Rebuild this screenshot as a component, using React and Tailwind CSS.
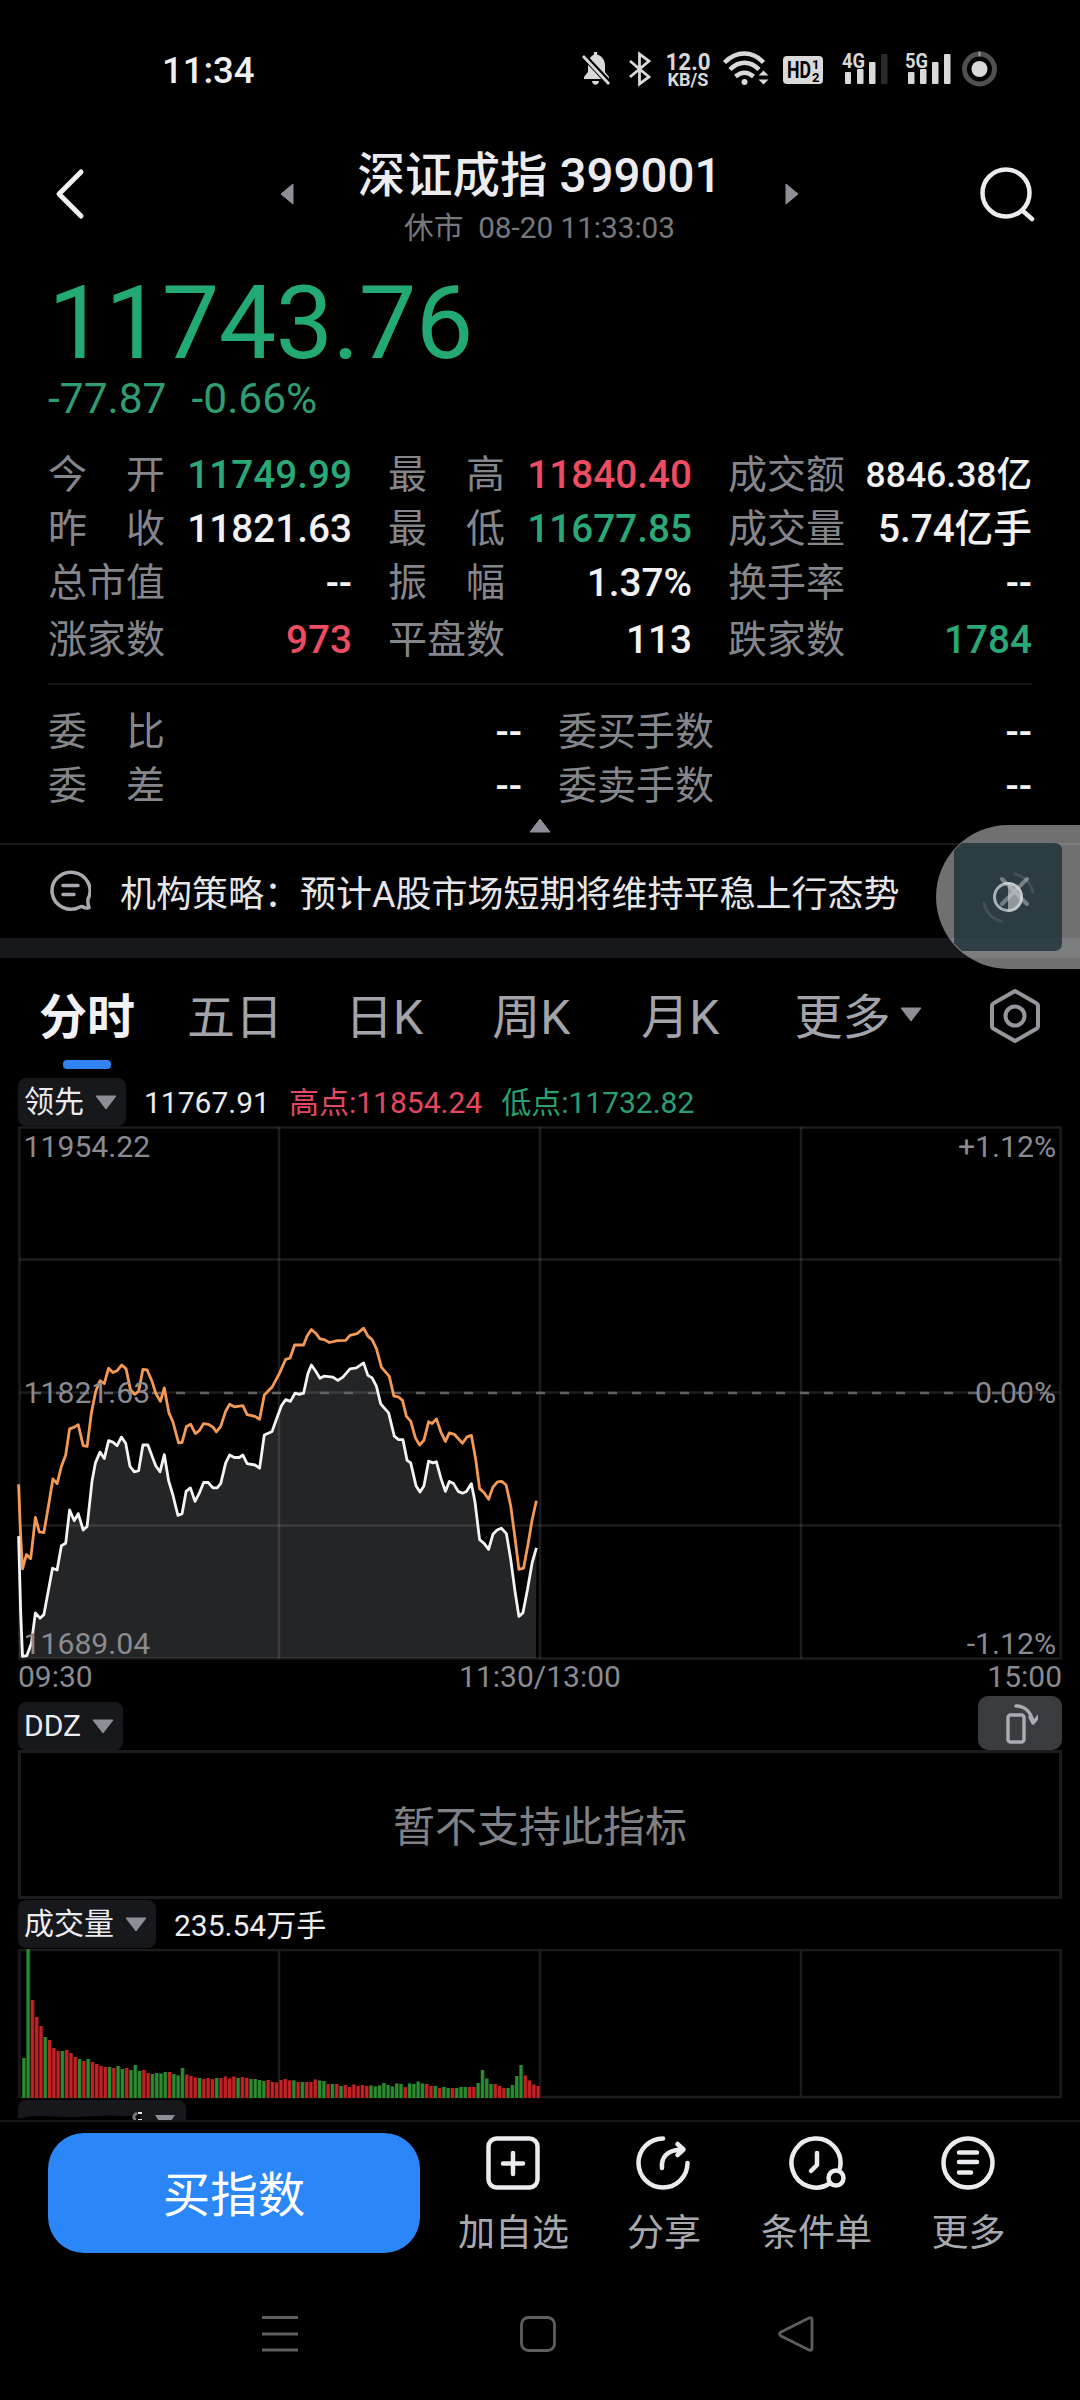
import React from "react";

const quoteRows = [
  [
    { label: "今开", value: "11749.99", color: "text-[#2aa878]" },
    { label: "最高", value: "11840.40", color: "text-[#ee4c62]" },
    { label: "成交额", value: "8846.38亿", color: "text-[#f2f2f4]", small: true },
  ],
  [
    { label: "昨收", value: "11821.63", color: "text-[#f2f2f4]" },
    { label: "最低", value: "11677.85", color: "text-[#2aa878]" },
    { label: "成交量", value: "5.74亿手", color: "text-[#f2f2f4]" },
  ],
  [
    { label: "总市值", value: "--", color: "text-[#f2f2f4]" },
    { label: "振幅", value: "1.37%", color: "text-[#f2f2f4]" },
    { label: "换手率", value: "--", color: "text-[#f2f2f4]" },
  ],
  [
    { label: "涨家数", value: "973", color: "text-[#ee4c62]" },
    { label: "平盘数", value: "113", color: "text-[#f2f2f4]" },
    { label: "跌家数", value: "1784", color: "text-[#2aa878]" },
  ],
];

const orderRows = [
  ["委比", "委买手数"],
  ["委差", "委卖手数"],
];

const tabs = [
  { name: "五日", space: "ml-[52px]" },
  { name: "日K", space: "ml-[62px]" },
  { name: "周K", space: "ml-[69px]" },
  { name: "月K", space: "ml-[71px]" },
  { name: "更多", space: "ml-[75px]" },
];

// price and leading series, stored at 2.8 units per pixel
const SCALE = 2.8;
const priceSeries =
  "52,1165 58,1380 63,1502 75,1500 88,1465 99,1380 112,1395 123,1385 135,1320 147,1255 160,1260 172,1192 184,1185 195,1092 208,1122 219,1102 233,1148 244,1138 258,1010 267,960 280,930 292,948 304,898 316,902 328,912 340,888 352,905 364,970 376,985 388,982 400,910 414,910 436,968 448,985 460,937 472,1010 484,1050 498,1107 510,1102 521,1040 533,1030 546,1068 558,1045 570,1015 583,1015 596,1030 608,1030 618,1018 632,960 643,938 656,945 670,945 680,938 692,962 714,966 727,975 740,882 762,872 775,835 788,800 800,783 813,788 826,765 838,768 850,765 862,710 872,686 885,705 896,723 908,717 932,720 946,729 960,720 980,697 998,694 1018,680 1030,715 1042,722 1054,745 1066,795 1088,820 1104,885 1116,895 1128,895 1140,953 1150,960 1165,1025 1176,1042 1187,1025 1200,955 1212,960 1222,957 1235,1005 1247,1040 1258,1012 1270,1018 1283,1040 1295,1045 1306,1040 1320,1018 1330,1070 1343,1175 1355,1185 1368,1202 1380,1160 1392,1148 1404,1143 1418,1158 1430,1230 1442,1320 1453,1390 1464,1380 1477,1315 1490,1240 1502,1198";
const leadSeries =
  "52,1020 57,1150 63,1257 74,1217 86,1228 99,1113 110,1153 123,1155 135,1085 148,1005 160,1018 172,970 184,938 195,865 208,860 219,853 233,912 244,914 256,820 268,760 280,730 292,738 304,695 316,707 328,702 341,686 353,697 365,755 377,768 388,760 400,698 412,700 425,730 436,765 449,788 460,750 473,820 484,845 500,904 510,903 522,858 534,852 547,878 558,870 570,850 583,852 596,860 606,873 618,858 632,815 643,796 656,803 680,800 692,825 714,830 727,838 740,770 762,748 782,710 800,670 812,667 825,630 850,630 860,605 872,587 884,597 896,613 908,615 922,623 945,618 968,617 980,603 1000,598 1018,583 1030,605 1042,615 1054,640 1068,692 1090,718 1103,773 1115,775 1127,785 1138,830 1150,843 1163,890 1175,910 1187,897 1200,845 1210,850 1222,837 1235,875 1247,900 1258,876 1272,880 1295,905 1308,887 1320,883 1332,950 1343,1032 1355,1043 1368,1062 1380,1028 1393,1013 1405,1012 1417,1022 1430,1080 1442,1170 1453,1258 1466,1255 1478,1190 1490,1120 1502,1066";

const toPoints = (series) =>
  series
    .split(" ")
    .map((p) => {
      const [x, y] = p.split(",").map(Number);
      return `${(x / SCALE).toFixed(1)},${(y / SCALE - 6).toFixed(1)}`;
    })
    .join(" ");

// one bar per minute: r = up, g = down, number = height
const volumes =
  "g40 g150 r98 r81 r72 g61 r58 r50 r47 g47 r48 r45 r41 g39 r37 g39 r36 r34 r32 r31 g31 r30 g32 g29 r30 g28 g33 g27 r28 r25 g24 g25 g24.5 g26 r26 g24 g22.5 g30 r23.5 r22 r20.5 g20 r19 r20 r19 g20 r20 r21.5 r19.5 r21.5 g20 r21 r20 g19 g19 g18 g17 r18 r16 r15.5 r18 r19 r17.5 g17.5 r16 g16 r16 r16 r18.5 g17.5 g17 r14 g14 r14 g12 r13 r11 r13.5 r12 r13 r12 g12.5 g11.5 g12.5 g15 g13 g11.5 g14.5 g14 r11 g14.5 g14 g16.5 g14.5 r14 r12 g12 r10 g11 g10 r10 g10 g11 g11 r11 r11 g15 g28 g19.5 g14 r14 r12 r10 g10 g13 g22 g33 r22.5 r17.5 r13.5 r12".split(
    " "
  );

const StatusBar = () => (
  <div className="flex h-[138px] items-start justify-between pl-[162px] pr-[83px]">
    <span className="mt-[49px] text-[36.500px] leading-[44px] font-medium text-[#f0f0f0]">
      11:34
    </span>
    <svg width="417" height="40" className="mt-[49px] overflow-visible" fill="#d9d9d9">
      {/* muted bell */}
      <path d="M4 30v-2l4-5v-7c0-6 3-9 6-10.500V3h3v2.500c4 1 8 5 8 10.500v7l4 5v2z" />
      <path d="M12 32h7c-.5 5-6.500 5-7 0z" />
      <path d="M1 4l28 30" stroke="#000" strokeWidth="6" />
      <path d="M3 7l26 28" stroke="#d9d9d9" strokeWidth="2.800" />
      {/* bluetooth */}
      <path
        d="M50 12l19 16-9.500 7V5l9.500 7-19 16"
        fill="none"
        stroke="#d9d9d9"
        strokeWidth="2.800"
      />
      <text x="108" y="20.500" fontSize="24.500" fontWeight="700" textAnchor="middle" textLength="45" lengthAdjust="spacingAndGlyphs">
        12.0
      </text>
      <text x="108" y="37" fontSize="18.500" fontWeight="700" textAnchor="middle" textLength="41" lengthAdjust="spacingAndGlyphs">
        KB/S
      </text>
      {/* wifi */}
      <g fill="none" stroke="#d9d9d9" strokeWidth="4.500">
        <path d="M144.500 13.500c12-12 28-12 39 0" />
        <path d="M150 20.500c9-9 20-9 29 0" />
        <path d="M155.500 27.500c6-5 12-5 18 0" />
      </g>
      <circle cx="164.500" cy="33" r="3" />
      <path d="M178.500 26.500l5-5 5 5zM178.500 30.500l5 5 5-5z" />
      {/* HD badge */}
      <rect x="203" y="7" width="40" height="28" rx="4" />
      <g fill="#000" fontWeight="700">
        <text x="207" y="29" fontSize="23" textLength="24" lengthAdjust="spacingAndGlyphs">
          HD
        </text>
        <text x="232" y="20" fontSize="13">
          1
        </text>
        <text x="232" y="32.500" fontSize="13">
          2
        </text>
      </g>
      {/* signal bars */}
      <g fontSize="21" fontWeight="700">
        <text x="262" y="18.500" textLength="23" lengthAdjust="spacingAndGlyphs">
          4G
        </text>
        <text x="325" y="18.500" textLength="23" lengthAdjust="spacingAndGlyphs">
          5G
        </text>
      </g>
      <rect x="265" y="23" width="6" height="12" rx="1" />
      <rect x="277" y="20" width="6.500" height="15" rx="1" />
      <rect x="289" y="13" width="6.500" height="22" rx="1" />
      <rect x="301" y="5" width="6.500" height="30" rx="1" fill="#2a2a2a" />
      <rect x="328" y="23" width="6.500" height="12" rx="1" />
      <rect x="340" y="20" width="6.500" height="15" rx="1" />
      <rect x="352" y="13" width="6.500" height="22" rx="1" />
      <rect x="364" y="5" width="6.500" height="30" rx="1" />
      {/* battery ring */}
      <circle cx="399.500" cy="20" r="15" fill="none" stroke="#505050" strokeWidth="5" />
      <path d="M399.500 2.500v5" stroke="#a0a0a0" strokeWidth="2" />
      <circle cx="399.500" cy="20" r="8" />
    </svg>
  </div>
);

const Header = () => (
  <div className="flex h-28 items-center justify-between pl-[53px] pr-[45px]">
    <svg width="33" height="54" fill="none" stroke="#f0f0f2" strokeWidth="5">
      <path d="M28 5L6 27l22 22" strokeLinecap="round" strokeLinejoin="round" />
    </svg>
    <div className="ml-[14px] flex items-center">
      <svg width="14" height="22" fill="#8e8f96">
        <path d="M13 1v20L1 11z" stroke="#8e8f96" strokeLinejoin="round" />
      </svg>
      <div className="w-[491px] pt-[5px] text-center">
        <h1 className="text-[47.500px] leading-14 font-medium text-[#ececf0]">
          深证成指 399001
        </h1>
        <p className="mt-1.5 text-[29.700px] leading-9 whitespace-pre text-[#77787e]">
          休市{"  "}08-20 11:33:03
        </p>
      </div>
      <svg width="14" height="22" fill="#8e8f96">
        <path d="M1 1v20l12-10z" stroke="#8e8f96" strokeLinejoin="round" />
      </svg>
    </div>
    <svg width="56" height="56" fill="none" stroke="#ececf0" strokeWidth="4.500">
      <circle cx="27" cy="27" r="23.500" />
      <path d="M44 45l9 8" strokeLinecap="round" />
    </svg>
  </div>
);

const Label = ({ text }) => (
  <span className="flex w-[117px] justify-between text-[39px] text-[#85868b]">
    {text.split("").map((ch, i) => (
      <span key={i}>{ch}</span>
    ))}
  </span>
);

const QuoteTable = () => (
  <div className="mt-[25px] px-12">
    {quoteRows.map((row, i) => (
      <div
        key={i}
        className={
          i === 3
            ? "grid h-[60px] grid-cols-3 gap-x-9 leading-[60px]"
            : "grid h-[54px] grid-cols-3 gap-x-9 leading-[54px]"
        }
      >
        {row.map((cell) => (
          <div key={cell.label} className="flex justify-between whitespace-nowrap">
            <Label text={cell.label} />
            <span
              className={`font-medium ${
                cell.small ? "text-[35.500px]" : "text-[38.700px]"
              } ${cell.color}`}
            >
              {cell.value}
            </span>
          </div>
        ))}
      </div>
    ))}
    <div className="mt-[13px] mb-[20px] h-0.5 bg-[#141416]" />
    {orderRows.map(([left, right]) => (
      <div key={left} className="grid h-[54px] grid-cols-2 gap-x-9 leading-[54px]">
        <div className="flex justify-between">
          <Label text={left} />
          <span className="text-[39px] font-medium text-[#f2f2f4]">--</span>
        </div>
        <div className="flex justify-between">
          <span className="text-[39px] text-[#85868b]">{right}</span>
          <span className="text-[39px] font-medium text-[#f2f2f4]">--</span>
        </div>
      </div>
    ))}
  </div>
);

const News = () => (
  <div className="relative flex h-[95px] items-center border-t-2 border-[#17181a] pl-[47px]">
    <svg width="44" height="44" className="mb-1" fill="none" stroke="#a9aaaf" strokeWidth="3.500" strokeLinecap="round" strokeLinejoin="round">
      <path d="M41 31A19 18.500 0 1 0 33 39q2-1 4 .5 2 1 5 0-1.500-3-1-8.500z" />
      <path d="M16 17.500h15M16 26.500h11" />
    </svg>
    <p className="mt-1.5 ml-[29px] text-[36px] leading-[50px] whitespace-nowrap text-[#e6e6e9]">
      机构策略：预计A股市场短期将维持平稳上行态势
    </p>
    {/* floating assistant button, docked to the right edge */}
    <svg width="144" height="144" className="absolute top-[-20px] right-0 z-10">
      <path d="M144 0H72a72 72 0 0 0 0 144h72z" fill="#fff" fillOpacity=".44" />
      <path
        d="M26 18h92q8 0 8 8v92q0 8-8 8H26Q0 104 0 72T26 18z"
        fill="#182b35"
        fillOpacity=".76"
        clipPath="url(#dock)"
      />
      <clipPath id="dock">
        <path d="M18 18h126v108H18z" />
      </clipPath>
      <g fill="none" stroke="#fff" strokeLinecap="round">
        <path d="M66 54l25 25M91 54L66 79" strokeOpacity=".35" strokeWidth="4" />
        <path d="M48 78c2 9 8 16 17 18" strokeOpacity=".1" strokeWidth="3" />
        <path d="M79 49c9 2 15 8 18 18" strokeOpacity=".1" strokeWidth="3" />
        <circle cx="72" cy="72" r="13.500" strokeOpacity=".6" strokeWidth="3" />
      </g>
      <path d="M72 57a15 15 0 0 1 0 30z" fill="#d0d4d6" fillOpacity=".6" />
    </svg>
  </div>
);

const Caret = ({ className = "" }) => (
  <svg width="22" height="15" className={className} fill="#8e8f96">
    <path d="M1 1h20L11 14z" stroke="#8e8f96" strokeLinejoin="round" />
  </svg>
);

const Tabs = () => (
  <div className="flex h-[118px] items-start pt-[26px] pl-[39px] text-[48px] leading-[68px] text-[#a3a4a9]">
    <div className="flex flex-col items-center">
      <span className="font-bold text-[#f2f2f4]">分时</span>
      <span className="mt-2 h-[9px] w-12 rounded-[4px] bg-[#3083f0]" />
    </div>
    {tabs.map((tab) => (
      <span key={tab.name} className={tab.space}>
        {tab.name}
      </span>
    ))}
    <Caret className="mt-[23px] ml-[10px]" />
    <svg width="54" height="56" className="mt-1 ml-[66px]" fill="none" stroke="#96979c" strokeWidth="4" strokeLinejoin="round">
      <path d="M27 3l21 12q2 1 2 3v20q0 2-2 3L27 53 6 41q-2-1-2-3V18q0-2 2-3z" />
      <circle cx="27" cy="28" r="9.500" />
    </svg>
  </div>
);

const Picker = ({ children }) => (
  <span className="flex h-12 items-center gap-[11px] rounded-lg bg-[#17181b] pr-[9px] pl-1.5 text-[#ececf0]">
    {children}
    <Caret />
  </span>
);

const PriceChart = () => (
  <svg width="1080" height="534" className="block">
    <polygon
      points={`19.5,532 ${toPoints(priceSeries)} 536,532`}
      fill="#242527"
    />
    <g stroke="#fff" strokeOpacity=".11" strokeWidth="2.500" fill="none">
      <rect x="19.500" y="1.500" width="1041" height="531" />
      <path d="M19.500 133.500h1041M19.500 266.500h1041M19.500 399.500h1041" />
      <path d="M279 1.500v531M540 1.500v531M801 1.500v531" />
    </g>
    <path d="M19.500 267H1060" stroke="#626368" strokeWidth="2.500" strokeDasharray="9 15" strokeDashoffset="11.500" />
    <polyline points={toPoints(leadSeries)} fill="none" stroke="#f59a55" strokeWidth="2.800" strokeLinejoin="round" />
    <polyline points={toPoints(priceSeries)} fill="none" stroke="#f4f4f4" strokeWidth="2.800" strokeLinejoin="round" />
    <g fill="#8a8b90" fontSize="30.200">
      <text x="23.500" y="31">11954.22</text>
      <text x="23.500" y="277">11821.63</text>
      <text x="23.500" y="528">11689.04</text>
      <g textAnchor="end">
        <text x="1056" y="31">+1.12%</text>
        <text x="1056" y="277">0.00%</text>
        <text x="1056" y="528">-1.12%</text>
      </g>
    </g>
  </svg>
);

const VolumeChart = () => (
  <svg width="1080" height="151" className="block">
    <g stroke="#1c1c1e" strokeWidth="2.500" fill="none">
      <rect x="19.500" y="1" width="1041" height="147" />
      <path d="M279 1v147M540 1v147M801 1v147" />
    </g>
    {volumes.map((v, i) => {
      const h = Number(v.slice(1));
      const up = v[0] === "r";
      return (
        <g key={i}>
          <rect x={22 + i * 4.286} y={149 - h} width="4.300" height={h} fill={up ? "#4a0d0e" : "#103612"} />
          <rect x={22.3 + i * 4.286} y={149 - h} width="3" height={h} fill={up ? "#c22226" : "#2c8a30"} />
        </g>
      );
    })}
  </svg>
);

const Indicators = () => (
  <div className="h-[1044px] overflow-hidden text-[30px] leading-12">
    <div className="mt-[2px] flex h-12 items-center pl-[18px]">
      <Picker>领先</Picker>
      <span className="mt-0.5 ml-[18px] text-[#ececf0]">11767.91</span>
      <span className="mt-0.5 ml-[19px] text-[#e54860]">高点:11854.24</span>
      <span className="mt-0.5 ml-[19px] text-[#2a9f72]">低点:11732.82</span>
    </div>
    <PriceChart />
    <div className="grid h-9 grid-cols-3 px-[18px] leading-[33px] text-[#8a8b90]">
      <span>09:30</span>
      <span className="text-center">11:30/13:00</span>
      <span className="text-right">15:00</span>
    </div>
    <div className="flex h-[54px] items-end justify-between px-[18px]">
      <Picker>DDZ</Picker>
      <span className="flex h-[54px] w-[84px] items-center justify-center rounded-[10px] bg-[#393b3f]">
        <svg width="36" height="44" fill="none" stroke="#a9abb3" strokeWidth="3.500" strokeLinejoin="round" strokeLinecap="round">
          <rect x="6" y="14" width="16" height="27" rx="2.500" />
          <path d="M14 5c9 0 15 6 17 16M31 22l-3-6M31 22l6-7" />
        </svg>
      </span>
    </div>
    <div className="mx-[18px] flex h-[149px] items-center justify-center border-[3px] border-[#1c1c1e] pt-1.5 text-[42px] text-[#808186]">
      暂不支持此指标
    </div>
    <div className="mt-px flex h-[49px] pl-[18px]">
      <Picker>成交量</Picker>
      <span className="mt-0.5 ml-[18px] text-[#ececf0]">235.54万手</span>
    </div>
    <VolumeChart />
    <div className="ml-[18px] h-12 w-[168px] rounded-lg bg-[#17181b]">
      <svg width="168" height="21">
        <path d="M0 21v-2q14-4 28-3t24 1 26-1 24 0 20-3v8z" fill="#000" />
        <path d="M119 13q-6 4-1 7" stroke="#77787a" strokeWidth="3" fill="none" />
        <path d="M120 13h4M120 20h4" stroke="#e8e8e8" strokeWidth="2" />
        <path d="M137 15h20l-4 6h-12z" fill="#8e8f96" />
      </svg>
    </div>
  </div>
);

const actions = [
  {
    name: "加自选",
    width: "w-[151px]",
    icon: (
      <>
        <rect x="2.500" y="2.500" width="49" height="49" rx="8" />
        <path d="M27 17v21M17 27.500h20" />
      </>
    ),
  },
  {
    name: "分享",
    width: "w-[150px]",
    icon: (
      <>
        <path d="M27 2.500A24.500 24.500 0 1 0 51.500 27" />
        <path d="M26 32c-1-11 5-18 20-18.500M41.500 8l6 5.500-6 5.500" />
      </>
    ),
  },
  {
    name: "条件单",
    width: "w-[155px]",
    icon: (
      <>
        <path d="M40.500 47.500A24.500 24.500 0 1 1 51 32" />
        <path d="M28 17v12l-6 6" />
        <circle cx="47" cy="42" r="7.500" />
      </>
    ),
  },
  {
    name: "更多",
    width: "w-[149px]",
    icon: (
      <>
        <circle cx="27" cy="27" r="24.500" />
        <path d="M18 16.500h18M18 26h18M18 36.500h12" />
      </>
    ),
  },
];

const BottomBar = () => (
  <div className="flex h-[152px] border-t-2 border-[#17181a] pt-[11px] pl-12">
    <button className="h-[120px] w-[372px] rounded-[36px] bg-[#2b87f8] pt-2 text-[47.500px] text-white">
      买指数
    </button>
    <div className="ml-[18px] flex pt-[3px]">
      {actions.map((a) => (
        <div key={a.name} className={`flex flex-col items-center ${a.width}`}>
          <svg width="58" height="56" fill="none" stroke="#ececf0" strokeWidth="4.500" strokeLinecap="round" strokeLinejoin="round" viewBox="-1 0 58 56">
            {a.icon}
          </svg>
          <span className="mt-[18px] text-[37px] leading-12 text-[#a8a9ae]">{a.name}</span>
        </div>
      ))}
    </div>
  </div>
);

const SystemNav = () => (
  <div className="flex h-32 items-center justify-between pt-1 pr-[265px] pb-2 pl-[260px]">
    <svg width="40" height="40" stroke="#5e5e5e" strokeWidth="3">
      <path d="M2 3.500h36M2 20h36M2 36h36" />
    </svg>
    <svg width="40" height="40" fill="none" stroke="#5e5e5e" strokeWidth="2.800">
      <rect x="2.500" y="3.500" width="33" height="33" rx="7" />
    </svg>
    <svg width="38" height="40" fill="none" stroke="#5e5e5e" strokeWidth="2.800" strokeLinejoin="round">
      <path d="M35 6v28q0 3-3 2L4 22q-3-2 0-4L32 4q3-1 3 2z" />
    </svg>
  </div>
);

export default function App() {
  return (
    <div className="flex h-[2400px] w-[1080px] flex-col overflow-hidden bg-black font-['Roboto','Noto_Sans_CJK_SC',sans-serif]">
      <StatusBar />
      <Header />
      <div className="mt-[21px] pl-12 text-[#22a974]">
        <div className="text-[102.500px] leading-[104px] tracking-[-0.7px]">11743.76</div>
        <div className="text-[42.500px] leading-12 whitespace-pre text-[#2f9c71]">
          -77.87<span className="ml-[25px]">-0.66%</span>
        </div>
      </div>
      <QuoteTable />
      <div className="flex h-[30px] justify-center pt-[5px]">
        <Caret className="rotate-180" />
      </div>
      <News />
      <div className="h-5 shrink-0 bg-[#17181b]" />
      <Tabs />
      <Indicators />
      <BottomBar />
      <SystemNav />
    </div>
  );
}
